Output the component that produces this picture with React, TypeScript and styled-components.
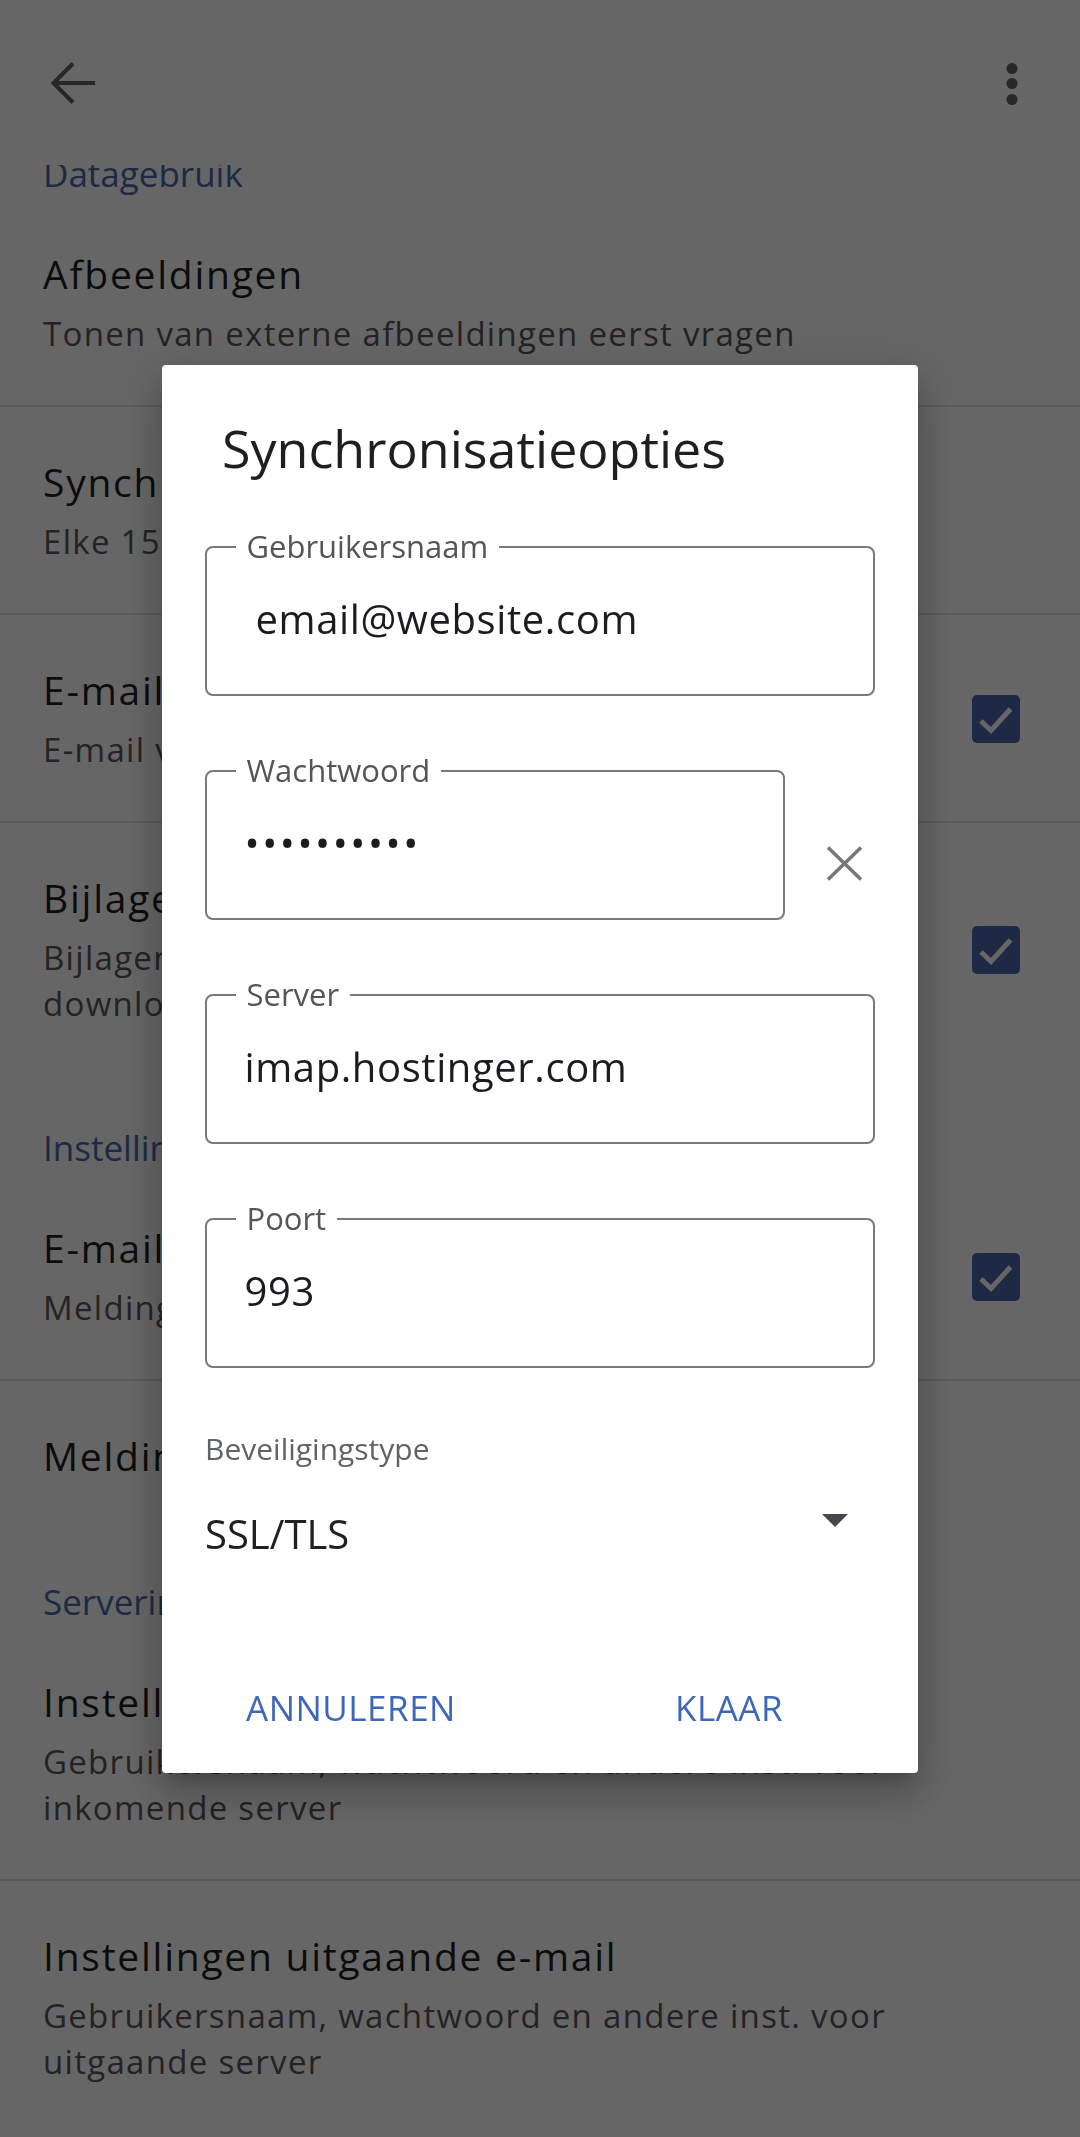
import React from 'react';
import styled, { createGlobalStyle } from 'styled-components';

const GlobalStyle = createGlobalStyle`
  html, body { margin: 0; padding: 0; }
  body { background: #ffffff; font-family: "Open Sans", "Noto Sans", sans-serif; }
  * { box-sizing: border-box; }
`;

const Page = styled.div`
  position: relative;
  width: 1080px;
  height: 2137px;
  overflow: hidden;
  background: #ffffff;
  display: flex;
  flex-direction: column;
`;

const AppBar = styled.header`
  position: relative;
  z-index: 1;
  flex: 0 0 165px;
  height: 165px;
  background: #ffffff;
  display: flex;
  align-items: center;
  justify-content: space-between;
  padding: 0 58px 0 48px;
`;

const IconButton = styled.span`
  display: flex;
  color: #5f6368;
`;

const SettingsList = styled.main`
  margin-top: -64px;
  display: flex;
  flex-direction: column;
`;

const SectionHeader = styled.h2`
  margin: 0;
  padding: 50px 43px 2px;
  font-size: 35px;
  line-height: 46px;
  font-weight: 400;
  color: #4b69ac;
  white-space: nowrap;
`;

const Item = styled.div<{ $divider?: boolean }>`
  display: flex;
  align-items: center;
  gap: 40px;
  padding: 50px 60px 48px 43px;
  border-bottom: ${(p) => (p.$divider ? '2px solid #e0e0e0' : '0')};
`;

const ItemText = styled.div`
  flex: 1;
  min-width: 0;
  display: flex;
  flex-direction: column;
  gap: 12px;
`;

const ItemTitle = styled.div`
  font-size: 39px;
  line-height: 50px;
  letter-spacing: 1.75px;
  color: #1f1f1f;
`;

const ItemSummary = styled.div`
  font-size: 33px;
  line-height: 46px;
  letter-spacing: 1.3px;
  color: #575757;
`;

const CheckBox = styled.span`
  flex: 0 0 48px;
  width: 48px;
  height: 48px;
  border-radius: 5px;
  background: #4b69ac;
  display: flex;
  align-items: center;
  justify-content: center;
`;

const Scrim = styled.div`
  position: fixed;
  inset: 0;
  z-index: 10;
  background: rgba(0, 0, 0, 0.6);
  display: flex;
  align-items: center;
  justify-content: center;
`;

const Dialog = styled.section`
  width: 756px;
  background: #ffffff;
  border-radius: 4px;
  box-shadow: 0 11px 15px -7px rgba(0, 0, 0, 0.2), 0 24px 38px 3px rgba(0, 0, 0, 0.14),
    0 9px 46px 8px rgba(0, 0, 0, 0.12);
  display: flex;
  flex-direction: column;
  padding: 57px 0 15px;
`;

const DialogTitle = styled.h1`
  margin: 0 0 72px;
  padding: 0 60px;
  font-size: 52px;
  line-height: 52px;
  font-weight: 400;
  color: #1f1f1f;
`;

const DialogBody = styled.div`
  padding: 0 43px;
  display: flex;
  flex-direction: column;
`;

const Fields = styled.div`
  display: flex;
  flex-direction: column;
  gap: 74px;
`;

const FieldRow = styled.div`
  display: flex;
  align-items: flex-start;
`;

const FieldBox = styled.div<{ $width?: number }>`
  position: relative;
  flex: ${(p) => (p.$width ? `0 0 ${p.$width}px` : '1 1 auto')};
  height: 150px;
  border: 2.5px solid #79797b;
  border-radius: 8px;
  display: flex;
  align-items: center;
  padding: 0 20px 4px 37.5px;
`;

const FloatLabel = styled.span`
  position: absolute;
  top: -1.25px;
  left: 28.5px;
  transform: translateY(-50%);
  padding: 0 11px;
  background: #ffffff;
  font-size: 31px;
  line-height: 31px;
  color: #555558;
  white-space: nowrap;
`;

const FieldValue = styled.span`
  font-size: 40px;
  line-height: 40px;
  letter-spacing: 0.6px;
  color: #1c1b1f;
  white-space: pre;
`;

const MaskedValue = styled.span`
  font-size: 40px;
  line-height: 40px;
  letter-spacing: 2.6px;
  color: #1c1b1f;
  white-space: pre;
`;

const ClearButton = styled.span`
  display: flex;
  margin: 76px 0 0 41px;
  color: #777777;
`;

const SelectLabel = styled.div`
  margin-top: 66px;
  font-size: 30px;
  line-height: 30px;
  color: #5f6368;
`;

const SelectRow = styled.div`
  margin-top: 50px;
  display: flex;
  justify-content: space-between;
  align-items: flex-start;
  padding-right: 27px;
`;

const SelectValue = styled.div`
  font-size: 40px;
  line-height: 40px;
  color: #202124;
`;

const Caret = styled.svg`
  display: block;
  color: #49454f;
`;

const Actions = styled.div`
  margin-top: 104px;
  display: grid;
  grid-template-columns: 1fr 1fr;
`;

const ActionButton = styled.button`
  height: 100px;
  padding: 0;
  border: 0;
  background: none;
  font-family: inherit;
  font-size: 35px;
  letter-spacing: 0.5px;
  color: #3d67b9;
`;

const BackIcon = () => (
  <svg width="52" height="48" viewBox="0 0 52 48" fill="none" stroke="currentColor" strokeWidth="4">
    <path d="M6 24H47" />
    <path d="M25 4.5L5.5 24L25 43.5" />
  </svg>
);

const MoreIcon = () => (
  <svg width="20" height="48" viewBox="0 0 20 48" fill="currentColor">
    <circle cx="10" cy="9.5" r="5.5" />
    <circle cx="10" cy="24.5" r="5.5" />
    <circle cx="10" cy="40.5" r="5.5" />
  </svg>
);

const CheckMark = () => (
  <svg width="48" height="48" viewBox="0 0 48 48" fill="none" stroke="#ffffff" strokeWidth="5">
    <path d="M9 26L19 35.5L38.5 14" />
  </svg>
);

const ClearIcon = () => (
  <svg width="37" height="35" viewBox="0 0 37 35" fill="none" stroke="currentColor" strokeWidth="3.6">
    <path d="M2 1.5L35 33.5" />
    <path d="M35 1.5L2 33.5" />
  </svg>
);

type Setting = {
  title: string;
  summary?: string;
  checked?: boolean;
  divider?: boolean;
};

const SettingItem = ({ title, summary, checked, divider }: Setting) => (
  <Item $divider={divider}>
    <ItemText>
      <ItemTitle>{title}</ItemTitle>
      {summary && <ItemSummary>{summary}</ItemSummary>}
    </ItemText>
    {checked && (
      <CheckBox>
        <CheckMark />
      </CheckBox>
    )}
  </Item>
);

export default function App() {
  return (
    <>
      <GlobalStyle />
      <Page>
        <AppBar>
          <IconButton>
            <BackIcon />
          </IconButton>
          <IconButton>
            <MoreIcon />
          </IconButton>
        </AppBar>
        <SettingsList>
          <SectionHeader>Datagebruik</SectionHeader>
          <SettingItem
            title="Afbeeldingen"
            summary="Tonen van externe afbeeldingen eerst vragen"
            divider
          />
          <SettingItem title="Synchronisatiefrequentie" summary="Elke 15 minuten" divider />
          <SettingItem
            title="E-mail synchroniseren"
            summary="E-mail voor dit account synchroniseren"
            checked
            divider
          />
          <SettingItem
            title="Bijlagen downloaden"
            summary="Bijlagen bij recente berichten automatisch downloaden via wifi"
            checked
          />
          <SectionHeader>Instellingen voor meldingen</SectionHeader>
          <SettingItem
            title="E-mailmeldingen"
            summary="Meldingen geven bij nieuwe e-mail"
            checked
            divider
          />
          <SettingItem title="Meldingen voor inbox" />
          <SectionHeader>Serverinstellingen</SectionHeader>
          <SettingItem
            title="Instellingen inkomende e-mail"
            summary="Gebruikersnaam, wachtwoord en andere inst. voor inkomende server"
            divider
          />
          <SettingItem
            title="Instellingen uitgaande e-mail"
            summary="Gebruikersnaam, wachtwoord en andere inst. voor uitgaande server"
          />
        </SettingsList>

        <Scrim>
          <Dialog role="dialog" aria-label="Synchronisatieopties">
            <DialogTitle>Synchronisatieopties</DialogTitle>
            <DialogBody>
              <Fields>
                <FieldRow>
                  <FieldBox>
                    <FloatLabel>Gebruikersnaam</FloatLabel>
                    <FieldValue> email@website.com</FieldValue>
                  </FieldBox>
                </FieldRow>
                <FieldRow>
                  <FieldBox $width={580}>
                    <FloatLabel>Wachtwoord</FloatLabel>
                    <MaskedValue>••••••••••</MaskedValue>
                  </FieldBox>
                  <ClearButton>
                    <ClearIcon />
                  </ClearButton>
                </FieldRow>
                <FieldRow>
                  <FieldBox>
                    <FloatLabel>Server</FloatLabel>
                    <FieldValue>imap.hostinger.com</FieldValue>
                  </FieldBox>
                </FieldRow>
                <FieldRow>
                  <FieldBox>
                    <FloatLabel>Poort</FloatLabel>
                    <FieldValue>993</FieldValue>
                  </FieldBox>
                </FieldRow>
              </Fields>
              <SelectLabel>Beveiligingstype</SelectLabel>
              <SelectRow>
                <SelectValue>SSL/TLS</SelectValue>
                <Caret width="26" height="13" viewBox="0 0 26 13">
                  <polygon points="0,0 26,0 13,13" fill="currentColor" />
                </Caret>
              </SelectRow>
            </DialogBody>
            <Actions>
              <ActionButton>ANNULEREN</ActionButton>
              <ActionButton>KLAAR</ActionButton>
            </Actions>
          </Dialog>
        </Scrim>
      </Page>
    </>
  );
}
